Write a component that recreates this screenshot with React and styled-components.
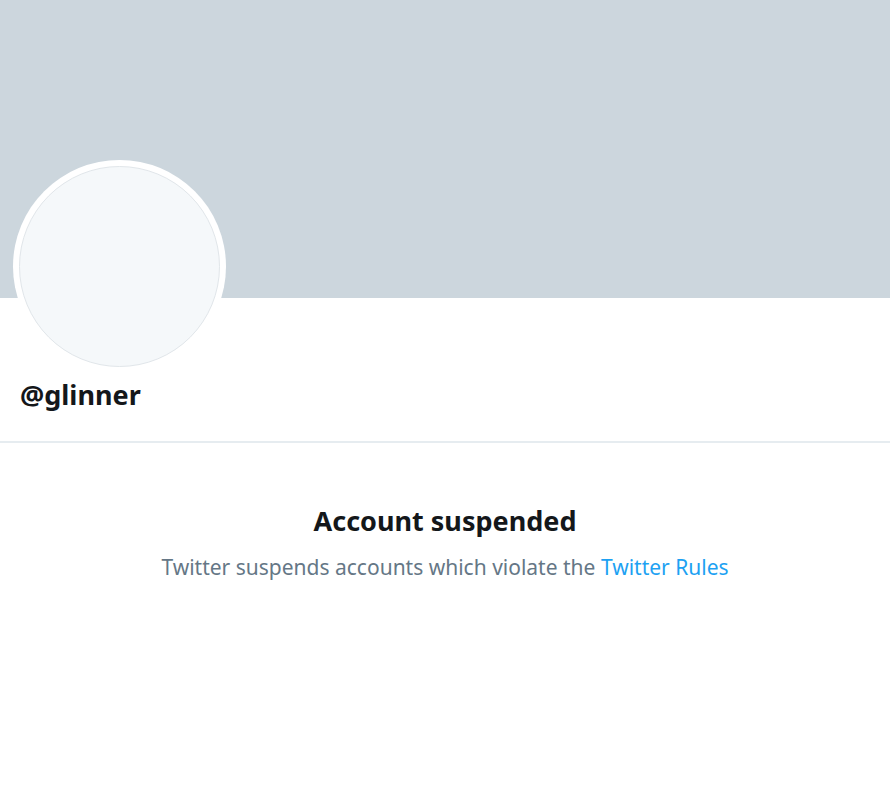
import React from "react";
import styled, { createGlobalStyle } from "styled-components";

const Global = createGlobalStyle`
  html, body { margin: 0; padding: 0; background: #fff; }
  body { font-family: "Noto Sans", "Open Sans", "Liberation Sans", sans-serif; }
`;

const Page = styled.div`
  width: 890px;
  min-height: 812px;
  background: #fff;
  display: flex;
  flex-direction: column;
`;

const Banner = styled.div`
  height: 298px;
  background: #ccd6dd;
`;

const Header = styled.div`
  display: flex;
  flex-direction: column;
  align-items: flex-start;
  padding: 0 0 0 13px;
  height: 143px;
  border-bottom: 2px solid #e6ecf0;
`;

const AvatarRing = styled.div`
  margin-top: -138px;
  width: 213px;
  height: 213px;
  border-radius: 50%;
  background: #fff;
  display: flex;
  align-items: center;
  justify-content: center;
`;

const Avatar = styled.div`
  width: 199px;
  height: 199px;
  border-radius: 50%;
  background: #f5f8fa;
  border: 1px solid #e1e6ea;
`;

const Handle = styled.div`
  margin: 6px 0 0 7px;
  font-size: 27px;
  font-weight: 700;
  color: #14171a;
  line-height: 32px;
`;

const Message = styled.div`
  display: flex;
  flex-direction: column;
  align-items: center;
  padding-top: 60px;
`;

const Title = styled.div`
  font-size: 27px;
  font-weight: 700;
  color: #14171a;
  line-height: 36px;
`;

const Sub = styled.div`
  margin-top: 14px;
  font-size: 21px;
  color: #657786;
  line-height: 28px;
`;

const Link = styled.a`
  color: #1da1f2;
  text-decoration: none;
`;

export default function App() {
  return (
    <Page>
      <Global />
      <Banner />
      <Header>
        <AvatarRing>
          <Avatar />
        </AvatarRing>
        <Handle>@glinner</Handle>
      </Header>
      <Message>
        <Title>Account suspended</Title>
        <Sub>
          Twitter suspends accounts which violate the <Link href="#">Twitter Rules</Link>
        </Sub>
      </Message>
    </Page>
  );
}
